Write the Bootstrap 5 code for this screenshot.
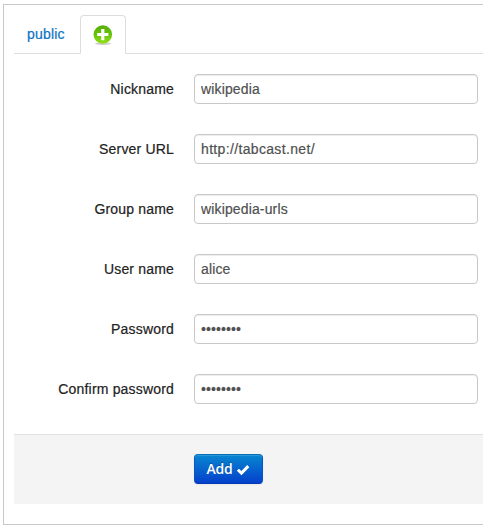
<!DOCTYPE html>
<html lang="en">
<head>
<meta charset="utf-8">
<meta name="viewport" content="width=device-width, initial-scale=1">
<title>Server groups</title>
<link href="https://cdn.jsdelivr.net/npm/bootstrap@5.3.0/dist/css/bootstrap.min.css" rel="stylesheet">
<style>
body { font: 14px/20px "Liberation Sans", Arial, sans-serif; color: #222; background: #fff; height: 529px; overflow: hidden; }
.settings-panel { margin: 4px 0 0 3px; height: 521px; padding: 10px 0 0 10px; border: 1px solid #c8c8c8; border-right: 0; }
.nav-tabs { --bs-nav-tabs-border-color: #ddd; --bs-nav-tabs-link-active-border-color: #ddd #ddd #fff; --bs-nav-tabs-link-active-bg: #fff; height: 39px; }
.nav-tabs .nav-link { --bs-nav-link-font-size: 14px; padding: 8px 12px; line-height: 21px; height: 39px; color: #0a74c4; letter-spacing: .2px; -webkit-text-stroke: .2px; border-radius: 4px 4px 0 0; }
.nav-tabs .nav-item:first-child { width: 64px; }
.nav-tabs .nav-item + .nav-item { margin-left: 2px; }
.nav-tabs .nav-link.active { width: 46px; padding: 9px 0 0 12px; }
.nav-tabs svg { display: block; }
.group-form { padding-top: 20px; }
.field-row { height: 30px; margin-bottom: 30px; }
.field-row label { width: 160px; text-align: right; margin-right: 20px; letter-spacing: .18px; -webkit-text-stroke: .2px; white-space: nowrap; }
.field-row .form-control { width: 284px; height: 30px; padding: 4px 6px; font-size: 14px; line-height: 20px; color: #505050; border: 1px solid #c8c8c8; border-radius: 4px; box-shadow: inset 0 1px 1px rgba(0,0,0,.075); letter-spacing: .14px; -webkit-text-stroke: .2px; }
.field-row .form-control[type=password] { letter-spacing: .1px; }
.field-row #url { letter-spacing: .34px; }
.action-bar { height: 70px; padding: 19px 0 0 180px; background: #f4f4f4; border-top: 1px solid #e2e2e2; }
.btn-add { width: 69px; height: 30px; padding: 0 0 1px; font: 600 14px/20px "Open Sans", sans-serif; letter-spacing: -.3px; color: #fff; text-shadow: 0 -1px 0 rgba(0,0,0,.25); background: linear-gradient(#0886d0, #0440cc); border: 1px solid; border-color: #0670b8 #0655c0 #0338b0; border-radius: 4px; box-shadow: inset 0 1px 0 rgba(255,255,255,.15), 0 1px 2px rgba(0,0,0,.05); }
.btn-add:hover { color: #fff; }
.btn-add svg { margin-top: 2px; }
</style>
<script src="https://cdn.jsdelivr.net/npm/bootstrap@5.3.0/dist/js/bootstrap.bundle.min.js"></script>
</head>
<body>
<main class="settings-panel">
  <ul class="nav nav-tabs">
    <li class="nav-item"><a class="nav-link" href="#">public</a></li>
    <li class="nav-item"><a class="nav-link active" href="#" aria-label="Add group">
      <svg width="20" height="20" viewBox="0 0 20 20">
        <defs><linearGradient id="leaf" x1="0" y1="0" x2="0" y2="1"><stop offset="0" stop-color="#58ae08"/><stop offset=".5" stop-color="#66c208"/><stop offset="1" stop-color="#93e316"/></linearGradient></defs>
        <ellipse cx="10" cy="18.6" rx="8" ry="1.3" fill="#999" opacity=".5"/>
        <circle cx="9.8" cy="9.5" r="9.3" fill="url(#leaf)"/>
        <path d="M8.2 4h3.2v4h4v3.1h-4v4.1H8.2v-4.1h-4V8h4z" fill="#fff"/>
      </svg></a></li>
  </ul>
  <form class="group-form">
    <div class="field-row d-flex align-items-center"><label for="nick">Nickname</label><input class="form-control" id="nick" type="text" value="wikipedia"></div>
    <div class="field-row d-flex align-items-center"><label for="url">Server URL</label><input class="form-control" id="url" type="text" value="http://tabcast.net/"></div>
    <div class="field-row d-flex align-items-center"><label for="group">Group name</label><input class="form-control" id="group" type="text" value="wikipedia-urls"></div>
    <div class="field-row d-flex align-items-center"><label for="user">User name</label><input class="form-control" id="user" type="text" value="alice"></div>
    <div class="field-row d-flex align-items-center"><label for="pass">Password</label><input class="form-control" id="pass" type="password" value="password"></div>
    <div class="field-row d-flex align-items-center"><label for="confirm">Confirm password</label><input class="form-control" id="confirm" type="password" value="password"></div>
    <div class="action-bar">
      <button class="btn btn-add d-flex align-items-center justify-content-center gap-1" type="button">Add
        <svg width="14" height="12" viewBox="0 0 14 12"><path d="M.8 6.8 2.9 4.7 5.4 7.1 11.2 1.1 13.3 3.2 5.5 11.2z" fill="#fff"/></svg>
      </button>
    </div>
  </form>
</main>
</body>
</html>
